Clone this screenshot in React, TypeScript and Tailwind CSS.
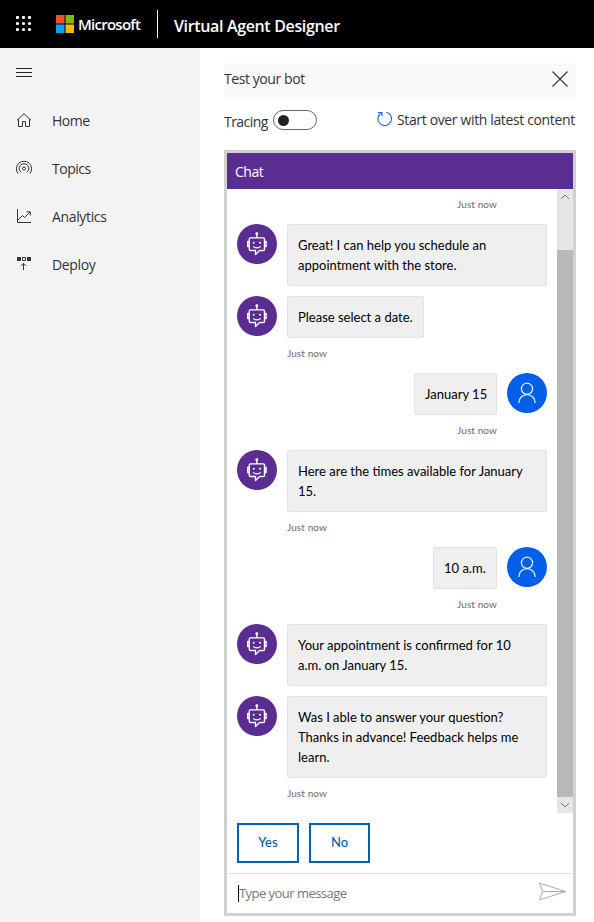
import type { ReactNode } from "react";

const ui = "font-['Open_Sans','Noto_Sans',sans-serif]";
const chat = "font-['Lato','Open_Sans',sans-serif]";

function BotAvatar() {
  return (
    <div className="flex size-10 shrink-0 items-center justify-center rounded-full bg-[#5c2d91]">
      <svg width="40" height="40" viewBox="0 0 40 40" fill="none" stroke="#fff" strokeWidth="1.4">
        <path d="M19.8 9.5v4.5M13.3 13.9h13.2q1 0 1 1v10.6q0 1-1 1h-3.8l-4.2 4v-4h-5.2q-1 0-1-1V14.9q0-1 1-1zM12.3 17.5h-1.6v5h1.6M27.5 17.5h1.6v5h-1.6" strokeLinejoin="round" />
        <circle cx="19.8" cy="9.7" r="1.4" fill="#fff" stroke="none" />
        <circle cx="16.8" cy="18.8" r="1" fill="#fff" stroke="none" />
        <circle cx="23" cy="18.8" r="1" fill="#fff" stroke="none" />
        <path d="M16 22.3c2 2 5.8 2 7.8 0" strokeWidth="1.2" />
      </svg>
    </div>
  );
}

function UserAvatar() {
  return (
    <div className="flex size-10 shrink-0 items-center justify-center rounded-full bg-[#005fe8]">
      <svg width="40" height="40" viewBox="0 0 40 40" fill="none" stroke="#e6effd" strokeWidth="1.3">
        <circle cx="20" cy="15.8" r="5.6" />
        <path d="M11.8 30c0-5 3.6-8.4 8.2-8.4s8.2 3.4 8.2 8.4" />
      </svg>
    </div>
  );
}

function Bubble({ className, children }: { className: string; children: ReactNode }) {
  return (
    <div className={`rounded-xs border border-[#e3e3e3] bg-[#efefef] p-2.5 text-[13px] leading-5 whitespace-nowrap text-black ${className}`}>
      {children}
    </div>
  );
}

function Bot({ width, children }: { width: string; children: ReactNode }) {
  return (
    <div className="flex gap-2.5">
      <BotAvatar />
      <Bubble className={width}>{children}</Bubble>
    </div>
  );
}

function User({ width, children }: { width: string; children: ReactNode }) {
  return (
    <div className="flex justify-end gap-2.5">
      <Bubble className={width}>{children}</Bubble>
      <UserAvatar />
    </div>
  );
}

function Time({ right = false }: { right?: boolean }) {
  return (
    <div className={`h-[35px] px-[50px] text-[10px] leading-[31px] text-[#6a6a6a] ${right ? "text-right" : ""}`}>
      <span className="tracking-[0.1px]">Just now</span>
    </div>
  );
}

function NavItem({ label, tracking, children }: { label: string; tracking: string; children: ReactNode }) {
  return (
    <a className="flex h-12 items-center gap-5 pl-4 text-[14px] text-[#333]">
      <svg width="16" height="16" viewBox="0 0 16 16" fill="none" stroke="#333" strokeWidth="1">
        {children}
      </svg>
      <span className={`pt-px ${tracking}`}>{label}</span>
    </a>
  );
}

export default function App() {
  return (
    <div className={`flex h-[922px] w-[594px] flex-col overflow-hidden bg-white ${ui}`}>
      <header className="flex h-12 shrink-0 items-center bg-black text-white">
        <svg className="ml-4" width="16" height="16" viewBox="0 0 16 16" fill="#fff">
          {[1.5, 7.5, 13.5].map((y) => [1.5, 7.5, 13.5].map((x) => <circle key={`${x}-${y}`} cx={x} cy={y} r="1.6" />))}
        </svg>
        <svg className="ml-6" width="18" height="18" viewBox="0 0 18 18">
          <path fill="#f25022" d="M0 0h8.5v8.5H0z" />
          <path fill="#7fba00" d="M9.5 0H18v8.5H9.5z" />
          <path fill="#00a4ef" d="M0 9.5h8.5V18H0z" />
          <path fill="#ffb900" d="M9.5 9.5H18V18H9.5z" />
        </svg>
        <span className="ml-1 w-16 text-[15px] font-semibold tracking-[-0.75px] whitespace-nowrap">Microsoft</span>
        <span className="ml-[15px] h-7 w-px bg-white" />
        <span className="ml-4 pt-[3px] text-[16px] font-semibold tracking-[-0.35px] whitespace-nowrap">Virtual Agent Designer</span>
      </header>

      <div className="flex min-h-0 flex-1">
        <nav className="w-50 shrink-0 bg-[#f3f3f3]">
          <div className="flex h-12 items-center pl-4">
            <svg width="16" height="16" viewBox="0 0 16 16" stroke="#222">
              <path d="M0 4.5h16M0 8.5h16M0 12.5h16" />
            </svg>
          </div>
          <NavItem label="Home" tracking="tracking-[-0.45px]">
            <path d="M1 8.3 8 1.7l7 6.6M2.5 7.2v7.3h4V9.6h3v4.9h4V7.2" />
          </NavItem>
          <NavItem label="Topics" tracking="tracking-[-0.5px]">
            <circle cx="8" cy="8.5" r="1.5" />
            <path d="M5.2 12.4a4.8 4.8 0 1 1 5.6 0M2 13.5A7.6 7.6 0 1 1 14 13.5" />
          </NavItem>
          <NavItem label="Analytics" tracking="tracking-[-0.35px]">
            <path d="M1.5 1v13.5H15M2 12l4.5-4.5 2 2L14 4M10.5 3.8h3.8v3.8" />
          </NavItem>
          <NavItem label="Deploy" tracking="tracking-[-0.35px]">
            <path d="M1 1h4v4H1zM11 1h4v4h-4z" fill="#333" stroke="none" />
            <path d="M6.5 1.5h3v3h-3zM7.5 14V7.5M5 9.8l2.5-2.5L10 9.8" />
          </NavItem>
        </nav>

        <main className="ml-6 flex w-[352px] shrink-0 flex-col pt-[15px]">
          <div className="flex h-[35px] items-center justify-between bg-[#fafafa] pr-2 text-[14px] text-[#333]">
            <span className="-mt-[5px] tracking-[-0.42px]">Test your bot</span>
            <svg className="-mt-1" width="16" height="16" viewBox="0 0 16 16" stroke="#333" strokeWidth="1.1">
              <path d="m.5.5 15 15M15.5.5l-15 15" />
            </svg>
          </div>
          <div className="flex h-[52px] items-start pt-3 text-[14px] leading-5 text-[#333]">
            <span className="w-[49px] shrink-0 pt-[2px] tracking-[-0.55px] whitespace-nowrap">Tracing</span>
            <span className="flex h-5 w-11 shrink-0 items-center rounded-full border border-[#666] bg-white pl-1">
              <span className="size-[11px] rounded-full bg-[#222]" />
            </span>
            <svg className="ml-[60px] shrink-0" width="16" height="18" viewBox="0 0 16 18" fill="none" stroke="#1664e8" strokeWidth="1.1">
              <path d="M9.4 2.2A6.8 6.8 0 1 1 4.2 3M1 2.5h4v4" />
            </svg>
            <span className="ml-[4px] tracking-[-0.36px] whitespace-nowrap">Start over with latest content</span>
          </div>

          <section className={`flex h-[766px] shrink-0 flex-col border-3 border-[#d1d1d1] bg-white ${chat}`}>
            <div className={`h-9 shrink-0 bg-[#5c2d91] pl-2 text-[14px] leading-[38px] text-white ${ui}`}>
              <span className="tracking-[-0.45px]">Chat</span>
            </div>
            <div className="flex h-[624px] shrink-0">
              <div className="w-[330px] px-2.5">
                <Time right />
                <Bot width="w-[260px]">
                  <div>Great! I can help you schedule an</div>
                  <div>appointment with the store.</div>
                </Bot>
                <div className="h-2.5" />
                <Bot width="w-[137px]">Please select a date.</Bot>
                <Time />
                <User width="w-[83px]">January 15</User>
                <Time right />
                <Bot width="w-[260px]">
                  <div>Here are the times available for January</div>
                  <div>15.</div>
                </Bot>
                <Time />
                <User width="w-[64px]">10 a.m.</User>
                <Time right />
                <Bot width="w-[260px]">
                  <div>Your appointment is confirmed for 10</div>
                  <div>a.m. on January 15.</div>
                </Bot>
                <div className="h-2.5" />
                <Bot width="w-[260px]">
                  <div>Was I able to answer your question?</div>
                  <div>Thanks in advance! Feedback helps me</div>
                  <div>learn.</div>
                </Bot>
                <Time />
              </div>
              <div className="flex w-4 flex-col bg-[#e6e6e6]">
                <svg className="shrink-0" width="16" height="61" viewBox="0 0 16 61" fill="none" stroke="#777">
                  <path d="m4 10 4-4 4 4" />
                </svg>
                <div className="h-[547px] bg-[#b8b8b8]" />
                <svg width="16" height="16" viewBox="0 0 16 16" fill="none" stroke="#777">
                  <path d="m4 6 4 4 4-4" />
                </svg>
              </div>
            </div>
            <div className="flex h-[60px] shrink-0 gap-2.5 px-2.5 pt-2.5 text-[13px] font-medium text-[#0063b1]">
              <button className="h-10 w-[62px] border-2 border-[#0063b1]">Yes</button>
              <button className="h-10 w-[61px] border-2 border-[#0063b1]">No</button>
            </div>
            <div className="flex h-10 shrink-0 items-center border-t border-[#e3e3e3] pl-[11px]">
              <span className="h-[17px] w-px bg-black" />
              <span className={`text-[13px] text-[#767676] ${ui} tracking-[-0.54px]`}>Type your message</span>
              <svg className="-mt-1 mr-[6px] ml-auto" width="29" height="20" viewBox="0 0 29 20" fill="none" stroke="#aaa">
                <path d="M1.5 1 27.5 9.5 1.5 18l3-8.5zM4.5 9.5h23" />
              </svg>
            </div>
          </section>
        </main>
      </div>
    </div>
  );
}
